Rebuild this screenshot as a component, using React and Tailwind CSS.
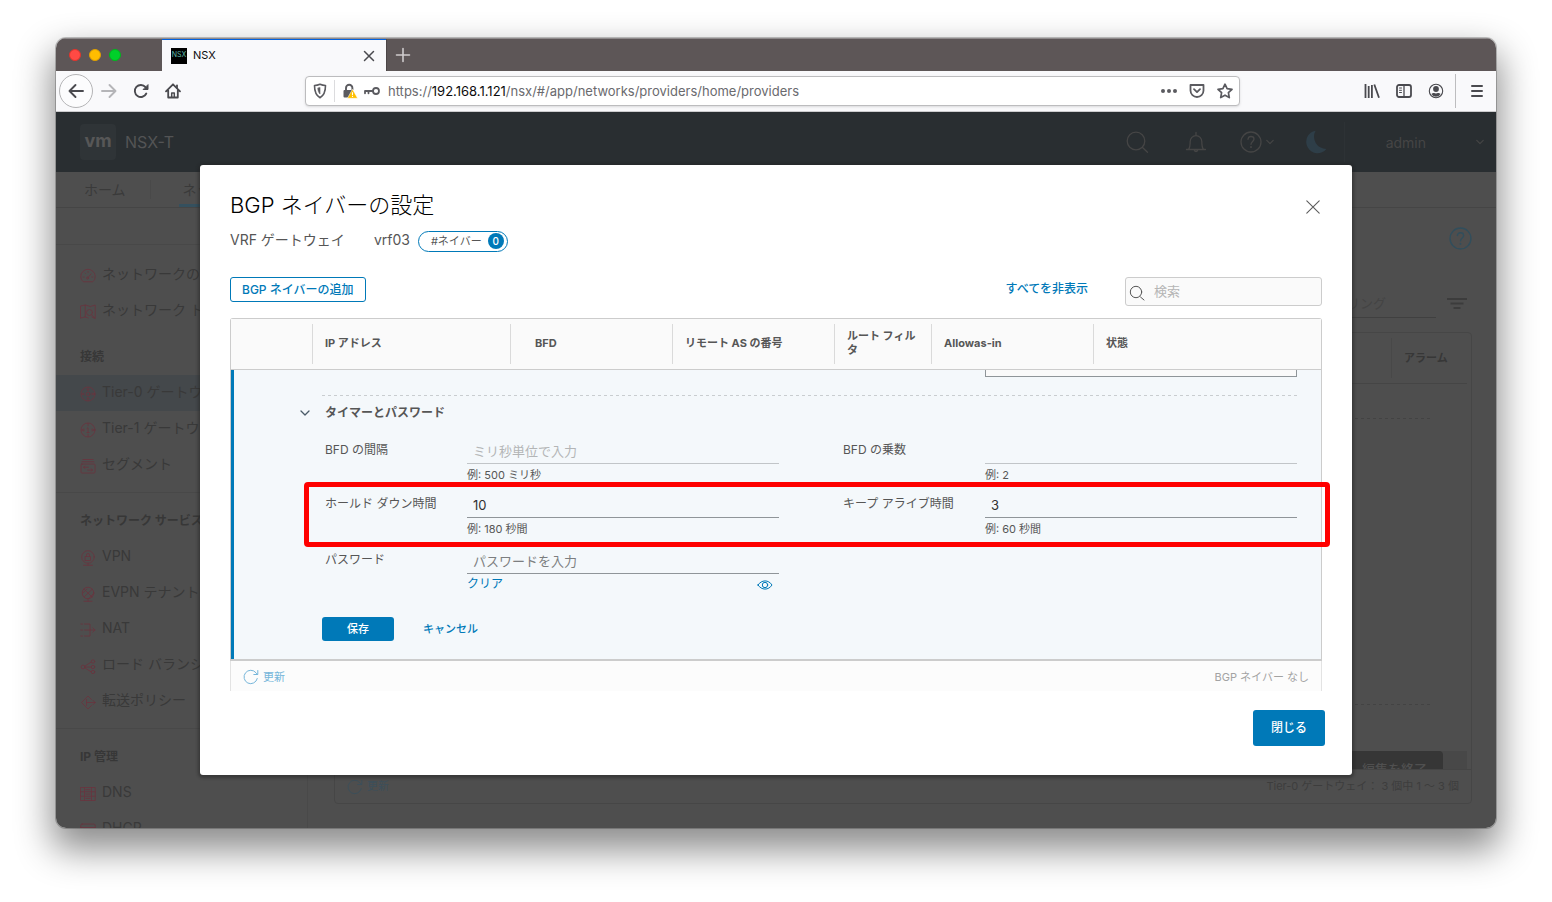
import React from "react";

const FONT = 'font-[Inter,"Noto_Sans_CJK_JP",sans-serif]';

function Svg({ size = 16, sw = 1, className = "", children, vb = "0 0 16 16" }) {
  return (
    <svg
      width={size}
      height={size}
      viewBox={vb}
      fill="none"
      stroke="currentColor"
      strokeWidth={sw}
      strokeLinecap="round"
      strokeLinejoin="round"
      className={"shrink-0 " + className}
      aria-hidden="true"
    >
      {children}
    </svg>
  );
}

/* ---------- browser chrome ---------- */

function TabStrip() {
  return (
    <div className="flex h-[33px] shrink-0 border-t border-[#8f8a8b] bg-[#5d5657]">
      <div className="flex w-[106px] items-center gap-2 pl-[13px]">
        <span className="size-3 rounded-full border border-[#e0342c] bg-[#ff4a44]" />
        <span className="size-3 rounded-full border border-[#e0a000] bg-[#ffbd00]" />
        <span className="size-3 rounded-full border border-[#00b51e] bg-[#00d02a]" />
      </div>
      <div className="flex w-[224px] items-center border-t border-[#0060df] bg-[#f9f9fb] pl-[9px] pr-[11px]">
        <span className="flex size-4 items-center justify-center bg-black text-[7px] text-[#5fb8a8]">NSX</span>
        <span className="ml-1.5 flex-1 text-[11px] text-[#0c0c0d]">NSX</span>
        <button aria-label="タブを閉じる" className="text-[#4a4a4f]">
          <Svg size={12} sw={1.5} vb="0 0 12 12"><path d="M1.500 1.500l9 9M10.500 1.500l-9 9" /></Svg>
        </button>
      </div>
      <button aria-label="新しいタブ" className="border-l border-[#4b4546] pl-2 text-[#cfcccd]">
        <Svg size={16} sw={1.6}><path d="M8 1.500v13M1.500 8h13" /></Svg>
      </button>
    </div>
  );
}

function Toolbar() {
  return (
    <div className="flex h-[41px] shrink-0 items-center border-b border-[#ccccce] bg-[#f9f9fb] text-[#4a4a4f]">
      <div className="flex items-center gap-4 pl-[3px]">
        <button aria-label="戻る" className="-mr-2 flex size-[34px] items-center justify-center rounded-full border border-[#b4b4b6] bg-[#fcfcfd]">
          <Svg sw={1.9}><path d="M15 8H1.500M7.500 2L1.500 8l6 6" /></Svg>
        </button>
        <button aria-label="進む" className="text-[#b5b5b8]">
          <Svg sw={1.9}><path d="M1 8h13.500M8.500 2l6 6-6 6" /></Svg>
        </button>
        <button aria-label="再読み込み">
          <Svg sw={1.9}><path d="M13.300 10.500A6 6 0 1 1 12.500 4.200L14 5.700" /><path d="M15 2v4.500h-4.500z" fill="currentColor" strokeWidth="1" /></Svg>
        </button>
        <button aria-label="ホームページ">
          <Svg sw={1.8}><path d="M1 8.300L8 1.300l7 7M3.200 7.500V14.500h9.600V7.500" /><path d="M6.700 14V10h2.600v4" strokeWidth="1.500" /><path d="M12 2.500v2" /></Svg>
        </button>
      </div>

      <div className="mx-[124px] flex h-[30px] flex-1 items-center rounded border border-[#bcbcbe] bg-white pl-1.5 pr-1.5 text-[#5b5b60] shadow-sm">
        <Svg sw={1.6}><path d="M8 1.300c2 .9 3.800 1.200 5.500 1.200 0 6.500-1.500 10-5.500 12.200C4 12.500 2.500 9 2.500 2.500 4.200 2.500 6 2.200 8 1.300z" /><path d="M8 4.700v6.300C6.600 9.500 6 8 5.800 5.300z" fill="currentColor" strokeWidth=".6" /></Svg>
        <span className="ml-1.5 mr-[7px] h-[22px] w-px bg-[#dcdcde]" />
        <svg width="16" height="16" viewBox="0 0 16 16" className="shrink-0" aria-hidden="true">
          <path d="M4 7V5a3.200 3.200 0 0 1 6.400 0v2" fill="none" stroke="#5b5b60" strokeWidth="1.900" />
          <rect x="1.500" y="7" width="9" height="7.500" rx="1" fill="#5b5b60" />
          <path d="M10.500 6.200L15.600 15.300H5.400z" fill="#ffbf00" stroke="#fff" strokeWidth=".5" strokeLinejoin="round" />
          <path d="M10.500 9.300v2.900M10.500 13v1" stroke="#fff" strokeWidth="1.100" />
        </svg>
        <Svg sw={1.8} className="ml-1.5"><circle cx="12" cy="8" r="3" /><path d="M9 8H1v2.300M4.500 8v2.300" /></Svg>
        <div role="textbox" aria-label="URL" className="ml-2 flex-1 whitespace-nowrap pt-0.5 text-[13px] text-[#6a6a6e]">
          https://<span className="text-[#0c0c0d]">192.168.1.121</span>/nsx/#/app/networks/providers/home/providers
        </div>
        <div className="flex items-center gap-3">
          <button aria-label="ページ操作"><Svg><g fill="currentColor" stroke="none"><circle cx="2" cy="8" r="2" /><circle cx="8" cy="8" r="2" /><circle cx="14" cy="8" r="2" /></g></Svg></button>
          <button aria-label="Pocket に保存"><Svg sw={1.8}><path d="M1.500 2h13v5.500c0 3.800-3 6.500-6.500 6.500s-6.500-2.700-6.500-6.500z" /><path d="M5 6.200l3 2.900 3-2.900" /></Svg></button>
          <button aria-label="ブックマーク"><Svg sw={1.7}><path d="M8 1.200l2.100 4.500 4.900.6-3.600 3.400.9 4.900L8 12.200l-4.300 2.400.9-4.900L1 6.300l4.900-.6z" /></Svg></button>
        </div>
      </div>

      <div className="flex items-center gap-4">
        <button aria-label="ライブラリ"><Svg sw={1.8}><path d="M1.500 1v14M4.700 3v12M7.900 2v13M10.300 1.500l4.700 13.300" strokeLinecap="butt" /></Svg></button>
        <button aria-label="サイドバー"><Svg sw={1.8}><rect x="1" y="2" width="14" height="12" rx="2" /><path d="M8 2v12" strokeWidth="1.300" /><path d="M3.500 5h2M3.500 7.300h2M3.500 9.500h2" strokeWidth="1" /></Svg></button>
        <button aria-label="アカウント"><Svg sw={1.1}><circle cx="8" cy="8" r="6.700" /><circle cx="8" cy="6" r="2.900" fill="currentColor" stroke="none" /><path d="M3.400 11a5.300 5.300 0 0 0 9.200 0c-1-.9-2.300-.9-2.900-.9-.6.500-2.800.5-3.400 0-.600 0-1.900 0-2.900.9z" fill="currentColor" stroke="none" /></Svg></button>
      </div>
      <span className="ml-[11px] mr-3.5 h-[34px] w-px bg-[#bdbdbf]" />
      <button aria-label="メニュー" className="mr-3"><Svg size={14} sw={2} vb="0 0 14 14"><path d="M2 2h10M2 7h10M2 12h10" /></Svg></button>
    </div>
  );
}

/* ---------- dimmed application page ---------- */

const NAV_ICONS = {
  gauge: <><path d="M3 13.500C1.500 12 .8 10.500.8 8.500a7.200 7.200 0 0 1 14.400 0c0 2-.7 3.500-2.200 5z" /><path d="M8 9.500l3-3.500M3.300 9h.8M12 9h.8M5 5l.5.5M8 3.500v.8" /><circle cx="7.500" cy="10" r="1" /></>,
  map: <><path d="M.8 2l4.500-1v12L.8 14zM5.300 1l5 1.500L15.200 1v13.500L12 13M5.300 13l3 1" /><circle cx="9.500" cy="8.500" r="3" /><path d="M11.600 10.700l3 3" /></>,
  tier0: <><circle cx="8" cy="8" r="7" /><circle cx="8" cy="8" r="1.900" /><path d="M8 1.500v2.700M8 14.500v-2.700M2 8h2.300M14 8h-2.300M6.800 3.300L8 4.500l1.200-1.200M6.800 12.700L8 11.500l1.200 1.200M3.500 6.800L2.300 8l1.200 1.200M12.500 6.800L13.700 8l-1.200 1.200" /></>,
  tier1: <><circle cx="8" cy="8" r="7" /><path d="M7 6.500l1-.8v4.800M6.900 10.500h2.200M8 1.500v2.200M8 14.500v-2.200M2 8h2.300M14 8h-2.300M3.500 6.800L2.300 8l1.200 1.200M12.500 6.800L13.700 8l-1.200 1.200" /></>,
  segment: <><path d="M3 1.500h10M2 3.800h12" /><rect x="1" y="6" width="14" height="9" rx="1" /><path d="M3.500 9.300h5M5 8L3.500 9.300 5 10.500M12.500 12h-5M11 10.700l1.500 1.300-1.500 1.300" /></>,
  vpn: <><circle cx="8" cy="7" r="6.300" /><rect x="5.500" y="6.500" width="5" height="4" /><path d="M6.500 6.500V5a1.500 1.500 0 0 1 3 0v1.500M8 13.300V15M3.500 15.300h9" /></>,
  evpn: <><circle cx="8" cy="7" r="5.800" /><path d="M4 3l8 8M12 3.500l-7.500 7M3 7l4-4M9 12.500l4-4.500M8 13v2M4 15.300h8" /></>,
  nat: <><path d="M1 2h1.500M4.500 2H10v12H4.500M1 14h1.500M1 8h1.500M4.500 8H15M12.800 5.800L15 8l-2.200 2.200" /></>,
  lb: <><circle cx="3" cy="9" r="1.900" /><circle cx="13" cy="3.500" r="1.700" /><circle cx="13" cy="9" r="1.700" /><circle cx="13" cy="14" r="1.700" /><path d="M5 8l6.300-4M5 9h6.300M5 10l6.300 4" /></>,
  fwd: <><path d="M11.500 5.500L8 2 1.500 8.500 8 15l3.500-3.500M6.500 5.500v6M6.500 8.500H15M13 6.300l2.200 2.200L13 10.700" /></>,
  dns: <><rect x=".8" y="1.500" width="14.400" height="13" /><path d="M.8 5.800h14.400M.8 10.200h14.400M4.500 1.500v13M11.500 1.500v13M6 3.700h4M6 8h4M6 12.400h4" /></>,
  dhcp: <><rect x=".8" y="2" width="14.400" height="12" rx="1.500" /><path d="M.8 5.500h14.400M3.500 8h9" /></>,
};

function NavItem({ icon, children, active }) {
  return (
    <a
      href="#"
      className={"flex h-9 items-center gap-1.5 whitespace-nowrap pb-[3px] pl-6 text-[14px] text-[#393939] " + (active ? "bg-[#44484b]" : "")}
    >
      <Svg sw={0.9} className="mt-[5px] text-[#68363f]">{NAV_ICONS[icon]}</Svg>
      {children}
    </a>
  );
}

function NavHeading({ children }) {
  return <h2 className="flex h-9 items-center whitespace-nowrap pl-6 text-[12px] font-bold text-[#373737]">{children}</h2>;
}

function Sidebar() {
  return (
    <nav aria-label="ネットワーク" className="w-[252px] shrink-0 overflow-hidden border-r border-[#494949]">
      <div className="h-[37px] border-b border-[#484848]" />
      <div className="border-b border-[#484848] pb-[9px] pt-3">
        <NavItem icon="gauge">ネットワークの概要</NavItem>
        <NavItem icon="map">ネットワーク トポロジ</NavItem>
        <div className="pt-2.5">
          <NavHeading>接続</NavHeading>
          <NavItem icon="tier0" active>Tier-0 ゲートウェイ</NavItem>
          <NavItem icon="tier1">Tier-1 ゲートウェイ</NavItem>
          <NavItem icon="segment">セグメント</NavItem>
        </div>
      </div>
      <div className="border-b border-[#484848] pb-[9px] pt-2.5">
        <NavHeading>ネットワーク サービス</NavHeading>
        <NavItem icon="vpn">VPN</NavItem>
        <NavItem icon="evpn">EVPN テナント</NavItem>
        <NavItem icon="nat">NAT</NavItem>
        <NavItem icon="lb">ロード バランシング</NavItem>
        <NavItem icon="fwd">転送ポリシー</NavItem>
      </div>
      <div className="pt-2.5">
        <NavHeading>IP 管理</NavHeading>
        <NavItem icon="dns">DNS</NavItem>
        <NavItem icon="dhcp">DHCP</NavItem>
      </div>
    </nav>
  );
}

function HelpIcon({ size, className = "" }) {
  return (
    <Svg size={size} sw={1.3} vb="0 0 22 22" className={className}>
      <circle cx="11" cy="11" r="10" />
      <path d="M8 8.300c.2-1.900 1.400-2.800 3-2.800s3 1 3 2.600c0 2.300-3 2.400-3 5.200" />
      <path d="M11 15.800v.4" strokeWidth="1.700" />
    </Svg>
  );
}

function ChevronDown({ size = 10, sw = 1.2, className = "" }) {
  return <Svg size={size} sw={sw} vb="0 0 10 10" className={className}><path d="M1 3l4 4 4-4" /></Svg>;
}

function RefreshIcon({ className = "" }) {
  return <Svg size={16} className={className}><path d="M14.300 9.500A6.700 6.700 0 1 1 13 3.800l1.500 1.700M14.800 1.500v4h-4" /></Svg>;
}

function AppHeader() {
  return (
    <header className="flex h-[60px] shrink-0 items-center bg-[#292e31] pl-6 pr-3 text-[#454545]">
      <span className="flex size-9 items-center justify-center rounded bg-[#2f3437] pb-1 text-[18px] font-bold text-[#575757]">vm</span>
      <span className="ml-[9px] flex-1 text-[16px] text-[#535455]">NSX-T</span>
      <button aria-label="検索"><Svg size={24} sw={1.3} vb="0 0 24 24"><circle cx="11" cy="11" r="8.800" /><path d="M17.500 17.500l5 4.800" /></Svg></button>
      <button aria-label="通知" className="ml-9"><Svg size={22} sw={1.3} vb="0 0 22 22"><path d="M1.500 18.500h19M3.500 18.500c1.500-2 1.700-4 1.700-8a5.800 5.800 0 0 1 11.600 0c0 4 .2 6 1.700 8M11 1.500v3M9.500 19.500c.3 1.300 2.700 1.300 3 0" /></Svg></button>
      <button aria-label="ヘルプ" className="ml-[33px] flex items-center gap-1"><HelpIcon size={22} /><ChevronDown size={8} sw={1.5} /></button>
      <button aria-label="テーマ" className="ml-7 text-[#2e3e48]">
        <Svg size={26} vb="0 0 24 24"><path d="M12.500 1.500A10.500 10.500 0 1 0 22.500 18.500 11.500 11.500 0 0 1 12.500 1.500z" fill="currentColor" stroke="none" /></Svg>
      </button>
      <span className="ml-4 h-10 w-px bg-[#2d3235]" />
      <button className="ml-[41px] flex items-center text-[14px]">
        <span className="mr-[50px]">admin</span>
        <ChevronDown size={8} sw={1.5} />
      </button>
    </header>
  );
}

const DIM_DASHES = "h-px bg-[repeating-linear-gradient(90deg,#434343_0_3px,transparent_3px_6px)]";

function Background() {
  return (
    <div className="flex h-full flex-col bg-[#4e4e4e]">
      <AppHeader />
      <div className="flex h-9 shrink-0 items-stretch border-b border-[#454545] text-[14px] text-[#3a3a3a]">
        <a href="#" className="flex items-center pl-7">ホーム</a>
        <span className="my-2 ml-6 w-px bg-[#494949]" />
        <a href="#" className="ml-7 flex items-center border-b-[3px] border-[#35505e] px-1 pt-[3px]">ネットワーク</a>
      </div>
      <div className="flex min-h-0 flex-1">
        <Sidebar />
        <main className="flex min-w-0 flex-1 flex-col pb-6 pl-[26px] pr-6">
          <div className="flex h-[60px] shrink-0 items-center justify-end">
            <button aria-label="ヘルプ" className="text-[#314e5c]"><HelpIcon size={23} /></button>
          </div>
          <div className="flex h-16 shrink-0 items-start justify-end pr-1 pt-[22px]">
            <div className="flex h-7 w-48 items-center justify-end border-b border-[#404040] pr-[50px] text-[13px] text-[#444444]">フィルタリング</div>
            <Svg size={22} sw={2} vb="0 0 22 22" className="ml-2.5 mt-[3px] text-[#3c3c3c]"><path d="M1 6h20M4.500 10.500h13M7.500 15h7" strokeLinecap="butt" /></Svg>
          </div>
          <div className="flex min-h-0 flex-1 flex-col rounded border border-[#464646]">
            <div className="mr-1 flex h-[51px] shrink-0 items-center justify-end border-b border-[#454545]">
              <div className="flex h-10 w-[76px] items-center border-l border-[#484848] pl-3 text-[11px] font-bold text-[#373737]">アラーム</div>
            </div>
            <div className="flex min-h-0 flex-1 flex-col overflow-hidden pr-1">
              <div className={"mr-[34px] mt-[34px] shrink-0 " + DIM_DASHES} />
              <div className="flex-1" />
              <div className={"mr-[34px] shrink-0 " + DIM_DASHES} />
              <div className="mt-[46px] flex h-[18px] shrink-0 justify-end overflow-hidden bg-[#484848] pr-6">
                <button className="h-9 rounded bg-[#363636] px-4 text-[13px] font-medium leading-9 text-[#505050]">編集を終了</button>
              </div>
            </div>
            <div className="flex h-[34px] shrink-0 items-center border-t border-[#454545] px-3 text-[11px] text-[#3d3d3d]">
              <button className="flex flex-1 items-center gap-1 text-[#3c4f5a]"><RefreshIcon />更新</button>
              <span>Tier-0 ゲートウェイ： 3 個中 1 〜 3 個</span>
            </div>
          </div>
        </main>
      </div>
    </div>
  );
}

/* ---------- dialog ---------- */

function Field({ id, label, placeholder = "", value, hint, faint, type = "text", children }) {
  return (
    <div className="flex items-start">
      <label htmlFor={id} className="w-[142px] shrink-0 text-[12px] leading-5 text-[#565656]">{label}</label>
      <div className="min-w-0 flex-1">
        <input
          id={id}
          type={type}
          defaultValue={value}
          placeholder={placeholder}
          className={
            "block h-6 w-full border-b bg-transparent px-1.5 text-[13px] text-[#313131] outline-none " +
            (faint ? "border-[#c1c5c8] placeholder:text-[#b3b5b6]" : "border-[#8f9599] placeholder:text-[#7c7e80]")
          }
        />
        {hint && <p className="pt-px text-[11px] leading-5 text-[#565656]">{hint}</p>}
        {children}
      </div>
    </div>
  );
}

function NeighborForm() {
  return (
    <form className="border-l-[3px] border-[#0079b8] bg-[#f4f8fb] pb-[18px] pl-[88px] pr-6" onSubmit={(e) => e.preventDefault()}>
      <div className="flex justify-end">
        <div className="h-[7px] w-[312px] border border-t-0 border-[#8f9599] bg-[#fafafa]" />
      </div>
      <div className="mt-[18px] h-px bg-[repeating-linear-gradient(90deg,#c9cdd0_0_3px,transparent_3px_6px)]" />
      <button type="button" aria-expanded="true" className="-ml-[22px] mt-[7px] flex h-5 items-center gap-[15px] text-[12px] font-bold text-[#565656]">
        <ChevronDown size={10} sw={1.3} className="text-[#4a5b68]" />
        タイマーとパスワード
      </button>
      <div className="flex flex-col gap-[9px] pl-[3px] pt-[17px]">
        <div className="grid grid-cols-2 gap-x-16">
          <Field id="bfd-interval" label="BFD の間隔" placeholder="ミリ秒単位で入力" hint="例: 500 ミリ秒" faint />
          <Field id="bfd-mult" label="BFD の乗数" hint="例: 2" faint />
        </div>
        <div className="relative grid grid-cols-2 gap-x-16">
          <Field id="hold" label="ホールド ダウン時間" value="10" hint="例: 180 秒間" />
          <Field id="keepalive" label="キープ アライブ時間" value="3" hint="例: 60 秒間" />
          <span className="pointer-events-none absolute -bottom-2 -left-[21px] -right-[33px] -top-3 rounded-sm border-[5px] border-[#ff0000]" />
        </div>
        <div className="mt-0.5 grid grid-cols-2 gap-x-16">
          <Field id="password" label="パスワード" placeholder="パスワードを入力" type="password">
            <div className="flex h-5 items-center justify-between pr-1.5">
              <button type="button" className="text-[12px] leading-5 text-[#0079b8]">クリア</button>
              <button type="button" aria-label="パスワードを表示" className="pt-0.5 text-[#0079b8]">
                <Svg size={16}><path d="M1 8c3.500-5.500 10.500-5.500 14 0-3.500 5.500-10.500 5.500-14 0z" /><circle cx="8" cy="8" r="2.700" /></Svg>
              </button>
            </div>
          </Field>
        </div>
      </div>
      <div className="mt-[23px] flex h-6 items-center text-[11px] font-medium">
        <button className="h-6 w-[72px] rounded-[3px] bg-[#0079b8] text-white">保存</button>
        <button type="button" className="ml-[29px] text-[#0079b8]">キャンセル</button>
      </div>
    </form>
  );
}

function HeadCell({ children, wide, first }) {
  return (
    <th scope="col" className="h-[50px] p-0 text-left align-middle font-bold">
      <div className={"flex h-10 items-center pb-0.5 pr-2 leading-[14px] " + (first ? "" : "border-l border-[#dadada] ") + (wide ? "pl-6" : "pl-3")}>
        {children}
      </div>
    </th>
  );
}

function Dialog() {
  return (
    <div role="dialog" aria-modal="true" aria-labelledby="dlg-title" className="w-4/5 rounded-[3px] bg-white pb-[29px] shadow-[0_1px_3px_2px_rgba(30,30,30,0.45)]">
      <div className="flex items-start justify-between px-[30px] pt-6">
        <h1 id="dlg-title" className="text-[22px] font-light leading-8 text-black">BGP ネイバーの設定</h1>
        <button aria-label="閉じる" className="mr-0.5 mt-[11px] text-[#5c5c5c]">
          <Svg size={14} sw={1.1} vb="0 0 14 14"><path d="M.8.8l12.400 12.400M13.200.8L.8 13.200" /></Svg>
        </button>
      </div>
      <div className="mt-1.5 flex h-6 items-center px-[30px] pt-1 text-[14px] text-[#565656]">
        <span className="-mt-1">VRF ゲートウェイ</span>
        <span className="-mt-1 ml-[29px]">vrf03</span>
        <span className="ml-2 flex h-[21px] items-center gap-1.5 rounded-full border border-[#0079b8] pl-3 pr-[3px] text-[11px]">
          #ネイバー
          <span className="flex size-4 items-center justify-center rounded-full bg-[#0079b8] text-[10px] font-medium text-white">0</span>
        </span>
      </div>
      <div className="mt-[26px] flex h-[29px] items-start px-[30px]">
        <button className="h-[25px] rounded-[3px] border border-[#0079b8] px-[11px] text-[12px] font-medium leading-[21px] text-[#0079b8]">BGP ネイバーの追加</button>
        <button className="ml-auto mr-[37px] text-[12px] font-medium leading-6 text-[#0079b8]">すべてを非表示</button>
        <div className="flex h-[29px] w-[197px] items-center gap-[9px] rounded-[3px] border border-[#cccccc] bg-[#fafafa] pl-[3px]">
          <Svg size={16} className="mt-0.5 text-[#565656]"><circle cx="7" cy="7" r="5.700" /><path d="M11.500 12l3.500 3" /></Svg>
          <input aria-label="検索" placeholder="検索" className="min-w-0 flex-1 bg-transparent text-[13px] outline-none placeholder:text-[#b5b5b5]" />
        </div>
      </div>

      <div className="mx-[30px] mt-3 rounded-t-[3px] border border-b-2 border-[#cccccc]">
        <table className="w-full table-fixed border-collapse text-[11px] text-[#565656]">
          <colgroup>
            <col className="w-[81px]" />
            <col className="w-[198px]" />
            <col className="w-[162px]" />
            <col className="w-[162px]" />
            <col className="w-[97px]" />
            <col className="w-[162px]" />
            <col />
          </colgroup>
          <thead className="border-b border-[#cccccc] bg-[#fafafa]">
            <tr>
              <HeadCell first />
              <HeadCell>IP アドレス</HeadCell>
              <HeadCell wide>BFD</HeadCell>
              <HeadCell>リモート AS の番号</HeadCell>
              <HeadCell>ルート フィルタ</HeadCell>
              <HeadCell>Allowas-in</HeadCell>
              <HeadCell>状態</HeadCell>
            </tr>
          </thead>
          <tbody>
            <tr>
              <td colSpan={7} className="p-0"><NeighborForm /></td>
            </tr>
          </tbody>
        </table>
      </div>
      <div className="mx-[30px] flex h-[30px] items-center justify-between border-x border-[#e3e3e3] bg-[#fcfcfc] px-3 pt-0.5 text-[11px] text-[#a3a3a3]">
        <button className="flex items-center gap-1 text-[#76b6da]"><RefreshIcon />更新</button>
        <span>BGP ネイバー なし</span>
      </div>
      <div className="mt-[19px] flex justify-end pr-[27px]">
        <button className="h-9 w-[72px] rounded-[3px] bg-[#0079b8] text-[12px] font-medium text-white">閉じる</button>
      </div>
    </div>
  );
}

export default function App() {
  return (
    <div className={"flex h-screen bg-white px-14 pb-[74px] pt-[38px] " + FONT}>
      <div className="flex min-w-0 flex-1 flex-col overflow-hidden rounded-[10px] shadow-[0_0_0_1px_rgba(0,0,0,0.22),0_18px_36px_4px_rgba(0,0,0,0.45)]">
        <TabStrip />
        <Toolbar />
        <div className="relative min-h-0 flex-1">
          <Background />
          <div className="absolute inset-0 flex items-center justify-center">
            <Dialog />
          </div>
        </div>
      </div>
    </div>
  );
}
